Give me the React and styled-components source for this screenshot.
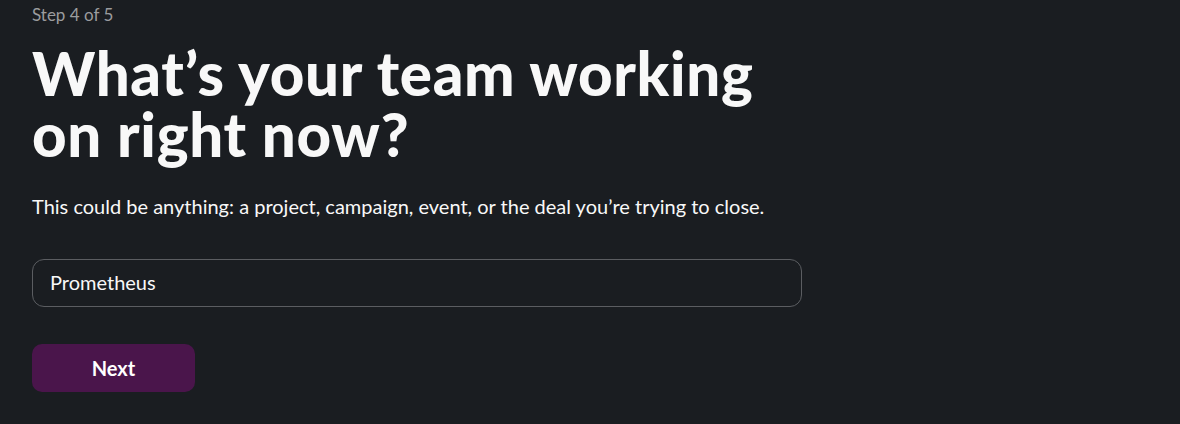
import React from "react";
import styled, { createGlobalStyle } from "styled-components";

const GlobalStyle = createGlobalStyle`
  html, body {
    margin: 0;
    background: #1a1d21;
  }
  body {
    font-family: Lato, "Noto Sans", sans-serif;
    color: #f8f8f8;
  }
`;

function App() {
  return (
    <Page>
      <GlobalStyle />
      <Step>Step 4 of 5</Step>
      <Title>What’s your team working on right now?</Title>
      <Lead>
        This could be anything: a project, campaign, event, or the deal you’re
        trying to close.
      </Lead>
      <Field defaultValue="Prometheus" />
      <NextButton>Next</NextButton>
    </Page>
  );
}

const Page = styled.div`
  padding: 3px 32px 0;
  width: 770px;
  display: flex;
  flex-direction: column;
  min-height: 424px;
`;

const Step = styled.div`
  font-size: 17px;
  line-height: 24px;
  color: #9b9c9e;
`;

const Title = styled.h1`
  margin: 16px 0 0;
  font-family: Lato, sans-serif;
  font-weight: 900;
  font-size: 60px;
  line-height: 61px;
  letter-spacing: 0.7px;
  color: #f8f8f8;
  width: 740px;
`;

const Lead = styled.p`
  margin: 27px 0 0;
  font-size: 20px;
  line-height: 28px;
  color: #f8f8f8;
`;

const Field = styled.input`
  margin-top: 39px;
  box-sizing: border-box;
  width: 770px;
  height: 48px;
  padding: 0 17px 3px;
  border: 1px solid #5b5d61;
  border-radius: 12px;
  background: transparent;
  font-family: Lato, sans-serif;
  font-size: 20px;
  color: #f8f8f8;
  outline: none;
`;

const NextButton = styled.button`
  margin-top: 37px;
  width: 163px;
  height: 48px;
  border: none;
  border-radius: 10px;
  background: #4a154b;
  color: #fff;
  font-family: Lato, sans-serif;
  font-weight: 700;
  font-size: 20px;
  cursor: pointer;
`;

export default App;
